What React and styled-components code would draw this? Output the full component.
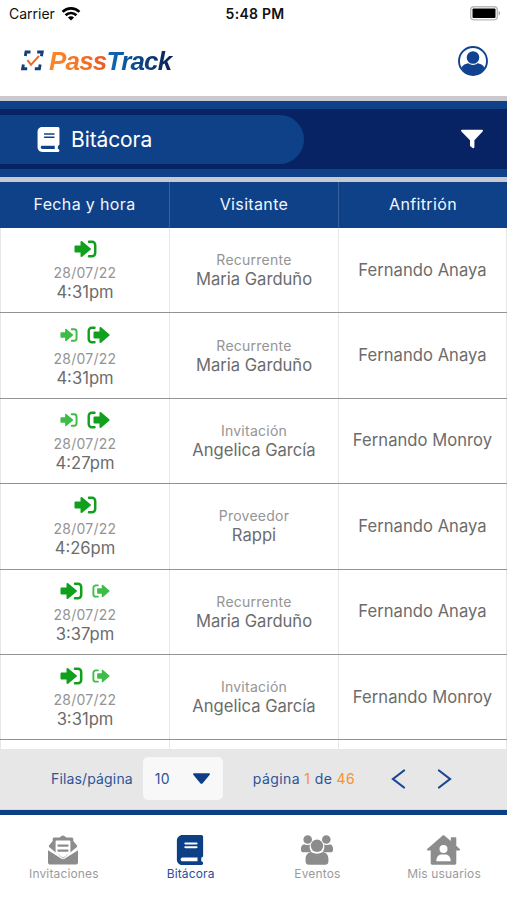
import React from "react";
import styled, { createGlobalStyle } from "styled-components";
import { FaBook } from "react-icons/fa6";

const GlobalStyle = createGlobalStyle`
  * {
    box-sizing: border-box;
  }

  body {
    margin: 0;
    background: #fff;
    font-family: Inter, "Liberation Sans", sans-serif;
  }
`;

const Screen = styled.div`
  width: 507px;
  height: 900px;
  overflow: hidden;
  display: flex;
  flex-direction: column;
  background: #fff;
`;

const StatusBar = styled.div`
  height: 27px;
  padding: 0 6px 0 9px;
  display: grid;
  grid-template-columns: 1fr auto 1fr;
  align-items: center;
  color: #111;
`;

const Carrier = styled.div`
  display: flex;
  align-items: center;
  gap: 6px;
  font-size: 14px;
`;

const Clock = styled.div`
  font-size: 14px;
  font-weight: 600;
  letter-spacing: 0.25px;
`;

const Battery = styled.svg`
  justify-self: end;
`;

const Header = styled.header`
  height: 69px;
  padding: 0 19px 2px 21px;
  display: flex;
  align-items: center;
  justify-content: space-between;
`;

const Logo = styled.div`
  display: flex;
  align-items: center;
  gap: 5px;
`;

const LogoName = styled.div`
  display: flex;
`;

const LogoText = styled.span`
  margin-right: -4px;
  padding-right: 4px;
  font-family: "Liberation Sans", sans-serif;
  font-size: 26px;
  font-style: italic;
  font-weight: 700;
  letter-spacing: -0.8px;
  line-height: 30px;
  color: transparent;
  background: ${(props) => props.$fill};
  background-clip: text;
`;

const TitleBar = styled.div`
  height: 86px;
  border: solid #c9c9cf;
  border-width: 5px 0;
  display: flex;
  flex-direction: column;
`;

const TitleInner = styled.div`
  flex: 1;
  border: solid #0f4188;
  border-width: 8px 0;
  padding-right: 24px;
  display: flex;
  align-items: center;
  justify-content: space-between;
  background: #072364;
`;

const Title = styled.h1`
  width: 304px;
  height: 49px;
  margin: 0;
  padding-left: 36px;
  border-radius: 0 25px 25px 0;
  display: flex;
  align-items: center;
  gap: 10px;
  background: #0f4188;
  color: #fff;
  font-size: 21px;
  font-weight: 400;
  letter-spacing: -0.1px;
`;

const TableHead = styled.div`
  height: 46px;
  display: grid;
  grid-template-columns: 170px 169px 168px;
  background: #0f4188;
`;

const HeadCell = styled.div`
  padding-bottom: 2px;
  border-right: 1px solid #37619d;
  display: flex;
  align-items: center;
  justify-content: center;
  color: #f2f6fb;
  font-size: 16px;
  letter-spacing: 0.35px;

  &:last-child {
    border-right: 0;
  }
`;

const TableBody = styled.div`
  height: 521px;
  overflow: hidden;
`;

const Row = styled.div`
  height: 85.4px;
  display: grid;
  grid-template-columns: 170px 169px 168px;
  border-bottom: 1px solid #939393;
`;

const Cell = styled.div`
  border-right: 1px solid #e6e6e6;
  display: flex;
  flex-direction: column;
  align-items: center;
  justify-content: center;
  color: #6c6c6c;
  font-size: 16.6px;
  line-height: 19px;
`;

const DateCell = styled(Cell)`
  padding-top: 1px;
  border-left: 1px solid #e6e6e6;
`;

const HostCell = styled(Cell)`
  letter-spacing: 0.04px;
`;

const Marks = styled.div`
  height: 20px;
  margin-bottom: 5px;
  display: flex;
  align-items: center;
  gap: 9px;
`;

const Small = styled.span`
  margin-top: -1px;
  padding-bottom: 1px;
  color: #949494;
  font-size: 14px;
  letter-spacing: 0.25px;
`;

const Pager = styled.div`
  height: 61px;
  padding: 0 0 1px 51px;
  border-bottom: 1px solid #d5d9e2;
  display: flex;
  align-items: center;
  background: #e7e7e7;
  color: #2d5497;
  font-size: 14px;
  letter-spacing: 0.15px;
`;

const PageSize = styled.div`
  width: 80px;
  height: 43px;
  margin: 0 30px 0 10px;
  padding: 0 13px 0 12px;
  border-radius: 5px;
  display: flex;
  align-items: center;
  justify-content: space-between;
  background: #f8f8f8;
`;

const PageInfo = styled.span`
  letter-spacing: 0.4px;
`;

const PageCount = styled.span`
  color: #f7912f;
`;

const Arrows = styled.div`
  margin-left: 36px;
  display: flex;
  gap: 31px;
`;

const TabBar = styled.nav`
  flex: 1;
  border-top: 5px solid #0d3f87;
  padding-top: 20px;
  display: grid;
  grid-template-columns: repeat(4, 1fr);
`;

const Tab = styled.div`
  display: flex;
  flex-direction: column;
  align-items: center;
  gap: 1px;
  color: ${(props) => (props.$active ? "#0d3f87" : "#8c8c8c")};
  font-size: 12px;
  letter-spacing: 0.15px;
`;

const TabLabel = styled.span`
  padding-left: 1px;
  color: ${(props) => (props.$active ? "#2650a0" : "#9b9b9b")};
`;

const rows = [
  { marks: ["in"], time: "4:31pm", kind: "Recurrente", visitor: "Maria Garduño", host: "Fernando Anaya" },
  { marks: ["in-small", "out"], time: "4:31pm", kind: "Recurrente", visitor: "Maria Garduño", host: "Fernando Anaya" },
  { marks: ["in-small", "out"], time: "4:27pm", kind: "Invitación", visitor: "Angelica García", host: "Fernando Monroy" },
  { marks: ["in"], time: "4:26pm", kind: "Proveedor", visitor: "Rappi", host: "Fernando Anaya" },
  { marks: ["in", "out-small"], time: "3:37pm", kind: "Recurrente", visitor: "Maria Garduño", host: "Fernando Anaya" },
  { marks: ["in", "out-small"], time: "3:31pm", kind: "Invitación", visitor: "Angelica García", host: "Fernando Monroy" },
];

function Mark({ type }) {
  const small = type.endsWith("small");
  const color = small ? "#3dbd47" : "#10a01b";
  return (
    <svg width={small ? 18 : 23} height={small ? 14 : 18} viewBox="0 0 22 18" fill={color}>
      {type.startsWith("in") ? (
        <>
          <path d="M.9 5.500h5.100V1.900c0-1 .9-1.300 1.600-.7l8.400 7c.6.500.6 1.100 0 1.600l-8.400 7c-.7.600-1.600.3-1.600-.7V12.500H.9c-.5 0-.9-.4-.9-.9V6.400c0-.5.4-.9.900-.9z" />
          <path d="M14.500 1.700h3a3.200 3.200 0 0 1 3.200 3.200v8.200a3.200 3.200 0 0 1-3.200 3.200h-3" fill="none" stroke={color} strokeWidth="2.500" strokeLinecap="round" />
        </>
      ) : (
        <>
          <path d="M6.900 5.500h5.100V1.900c0-1 .9-1.300 1.600-.7l8.100 7c.6.500.6 1.100 0 1.600l-8.100 7c-.7.600-1.600.3-1.600-.7V12.500H6.900c-.5 0-.9-.4-.9-.9V6.400c0-.5.4-.9.900-.9z" />
          <path d="M7 1.700H4.400a3.200 3.200 0 0 0-3.200 3.200v8.200a3.200 3.200 0 0 0 3.200 3.200H7" fill="none" stroke={color} strokeWidth="2.400" strokeLinecap="round" />
        </>
      )}
    </svg>
  );
}

function WifiIcon() {
  return (
    <svg width="20" height="14" viewBox="0 0 20 14" fill="none" stroke="#000" strokeWidth="2.700">
      <path d="M1.600 4.900a12 12 0 0 1 16.800 0" />
      <path d="M4.600 8.200a7.700 7.700 0 0 1 10.800 0" />
      <path d="M10 13.600 6.900 10.500a4.400 4.400 0 0 1 6.200 0z" fill="#000" stroke="none" />
    </svg>
  );
}

function BatteryIcon() {
  return (
    <Battery width="31" height="15" viewBox="0 0 31 15">
      <rect x=".7" y=".7" width="26.600" height="13.200" rx="3.400" fill="#fff" stroke="#b9b9b9" strokeWidth="1.400" />
      <rect x="2.500" y="2.500" width="23" height="9.600" rx="1" fill="#000" />
      <path d="M28.600 5c1.900.7 1.900 3.900 0 4.600z" fill="#aaa" />
    </Battery>
  );
}

function ScanIcon() {
  return (
    <svg width="23" height="21" viewBox="0 0 23 21" fill="none">
      <path d="M4.300 6 5 2h4.500M16.200 2h5l-.8 4.200M2.400 14.600l-.8 4.200h4.600M13.800 18.800h4.600l.8-4.200" stroke="#133d7c" strokeWidth="2.900" />
      <path d="m6.400 10.200 3.600 4.600 8-9" stroke="#ef6423" strokeWidth="2" />
    </svg>
  );
}

function UserIcon() {
  return (
    <svg width="30" height="30" viewBox="0 0 30 30" fill="#114291">
      <circle cx="15" cy="15" r="14" fill="none" stroke="#114291" strokeWidth="1.900" />
      <circle cx="15" cy="11.500" r="6.300" />
      <path d="M3.500 21.800c1.400-3 4.200-4 7-4.500 2.700 2.300 6.300 2.300 9 0 2.800.5 5.600 1.500 7 4.500A13.500 13.500 0 0 1 15 29 13.500 13.500 0 0 1 3.500 21.800z" />
    </svg>
  );
}

function FunnelIcon() {
  return (
    <svg width="22" height="20" viewBox="0 0 22 20" fill="#fff">
      <path d="M1.200.8h19.600c1.100 0 1.400 1 .8 1.800l-8.200 8.600v6.900c0 1-.9 1.300-1.700.8l-2-1.300c-.5-.3-.7-.7-.7-1.200v-5.200L.4 2.600C-.2 1.800.1.8 1.200.8z" />
    </svg>
  );
}

function InviteIcon() {
  return (
    <svg width="30" height="30" viewBox="0 0 30 30" fill="currentColor">
      <path d="M6.400 2.600h5.200l1.700-1.400c1-.9 2.400-.9 3.400 0l1.700 1.400h5.200c1 0 1.700.7 1.700 1.700V6l3.500 4.200c.6.700.5 1.500-.2 2L15 23.500 1.400 12.200c-.7-.5-.8-1.300-.2-2L4.700 6V4.300c0-1 .7-1.700 1.700-1.700z" />
      <path d="M8.600 5.600h12.800c.6 0 1 .4 1 1v11.200L15 22.800l-7.400-5V6.600c0-.6.4-1 1-1z" fill="#fff" />
      <path d="M10.400 10.600h9.200M10.400 15.600h9.200" stroke="currentColor" strokeWidth="2.200" strokeLinecap="round" />
      <path d="M0 15.200 13.500 23.800c1 .6 2 .6 3 0L30 15.200v12c0 1.500-.9 2.400-2.400 2.400H2.400C.9 29.600 0 28.700 0 27.200z" />
    </svg>
  );
}

function GroupIcon() {
  return (
    <svg width="32" height="30" viewBox="0 0 32 30" fill="currentColor">
      <circle cx="6.700" cy="4.500" r="4.300" />
      <circle cx="25.300" cy="4.500" r="4.300" />
      <circle cx="16" cy="10.800" r="6.200" />
      <path d="M3.200 9.200c2.100 1.100 3.900 1.100 5.800.2a8 8 0 0 0 1.300 7.100c-1 .4-2.100.7-3.200.7H2.400C.9 17.200 0 16.400 0 14.900v-1.600c0-2.100 1.100-3.700 3.200-4.100z" />
      <path d="M28.800 9.200c-2.100 1.100-3.900 1.100-5.800.2a8 8 0 0 1-1.300 7.100c1 .4 2.100.7 3.200.7h4.700c1.500 0 2.400-.8 2.400-2.300v-1.600c0-2.100-1.100-3.700-3.200-4.100z" />
      <path d="M10.300 17c3.500 2.200 7.900 2.200 11.400 0 3.700.5 5.700 3.200 5.700 6.800v2.600c0 2-1.200 3.300-3.200 3.300H7.800c-2 0-3.200-1.300-3.200-3.300v-2.600c0-3.600 2-6.300 5.700-6.800z" />
    </svg>
  );
}

function HouseIcon() {
  return (
    <svg width="33" height="30" viewBox="0 0 33 30" fill="currentColor">
      <path d="M15.400.8c.7-.6 1.500-.6 2.200 0l6.200 5.300V3.300c0-.6.4-1 1-1h3.500c.6 0 1 .4 1 1v7.500l3.200 2.900c1 .9.500 1.900-.7 1.900h-2.500v12.300c0 1.100-.7 1.800-1.800 1.800h-22c-1.100 0-1.800-.7-1.800-1.800V15.600H1.200c-1.200 0-1.700-1-.7-1.900z" />
      <circle cx="16.500" cy="14" r="4" fill="#fff" />
      <path d="M9.300 26.200c0-4.200 2.300-6.700 5.400-6.700h3.600c3.100 0 5.400 2.500 5.400 6.700z" fill="#fff" />
    </svg>
  );
}

function App() {
  return (
    <Screen>
      <GlobalStyle />
      <StatusBar>
        <Carrier>
          Carrier
          <WifiIcon />
        </Carrier>
        <Clock>5:48 PM</Clock>
        <BatteryIcon />
      </StatusBar>
      <Header>
        <Logo>
          <ScanIcon />
          <LogoName>
            <LogoText $fill="linear-gradient(70deg, #f9862a 20%, #e8501f)">Pass</LogoText>
            <LogoText $fill="linear-gradient(90deg, #0f6cba, #0a2559 90%)">Track</LogoText>
          </LogoName>
        </Logo>
        <UserIcon />
      </Header>
      <TitleBar>
        <TitleInner>
          <Title>
            <FaBook size={25} />
            Bitácora
          </Title>
          <FunnelIcon />
        </TitleInner>
      </TitleBar>
      <TableHead>
        <HeadCell>Fecha y hora</HeadCell>
        <HeadCell>Visitante</HeadCell>
        <HeadCell>Anfitrión</HeadCell>
      </TableHead>
      <TableBody>
        {rows.map((row, i) => (
          <Row key={i}>
            <DateCell>
              <Marks>
                {row.marks.map((mark) => (
                  <Mark key={mark} type={mark} />
                ))}
              </Marks>
              <Small>28/07/22</Small>
              {row.time}
            </DateCell>
            <Cell>
              <Small>{row.kind}</Small>
              {row.visitor}
            </Cell>
            <HostCell>{row.host}</HostCell>
          </Row>
        ))}
        <Row>
          <DateCell />
          <Cell />
          <HostCell />
        </Row>
      </TableBody>
      <Pager>
        Filas/página
        <PageSize>
          10
          <svg width="17" height="11" viewBox="0 0 17 11" fill="#0d3f87">
            <path d="M1 .3h15c.9 0 1.200.8.700 1.400l-7.200 8.700c-.5.600-1.500.600-2 0L.3 1.700C-.2 1.100.1.300 1 .3z" />
          </svg>
        </PageSize>
        <PageInfo>
          página <PageCount>1</PageCount> de <PageCount>46</PageCount>
        </PageInfo>
        <Arrows>
          <svg width="15" height="20" viewBox="0 0 15 20" fill="none" stroke="#1a4793" strokeWidth="2.200" strokeLinecap="round">
            <path d="M13 1.500 2 10l11 8.500" />
          </svg>
          <svg width="15" height="20" viewBox="0 0 15 20" fill="none" stroke="#1a4793" strokeWidth="2.200" strokeLinecap="round">
            <path d="m2 1.500 11 8.500L2 18.500" />
          </svg>
        </Arrows>
      </Pager>
      <TabBar>
        <Tab>
          <InviteIcon />
          <TabLabel>Invitaciones</TabLabel>
        </Tab>
        <Tab $active>
          <FaBook size={30} />
          <TabLabel $active>Bitácora</TabLabel>
        </Tab>
        <Tab>
          <GroupIcon />
          <TabLabel>Eventos</TabLabel>
        </Tab>
        <Tab>
          <HouseIcon />
          <TabLabel>Mis usuarios</TabLabel>
        </Tab>
      </TabBar>
    </Screen>
  );
}

export default App;
